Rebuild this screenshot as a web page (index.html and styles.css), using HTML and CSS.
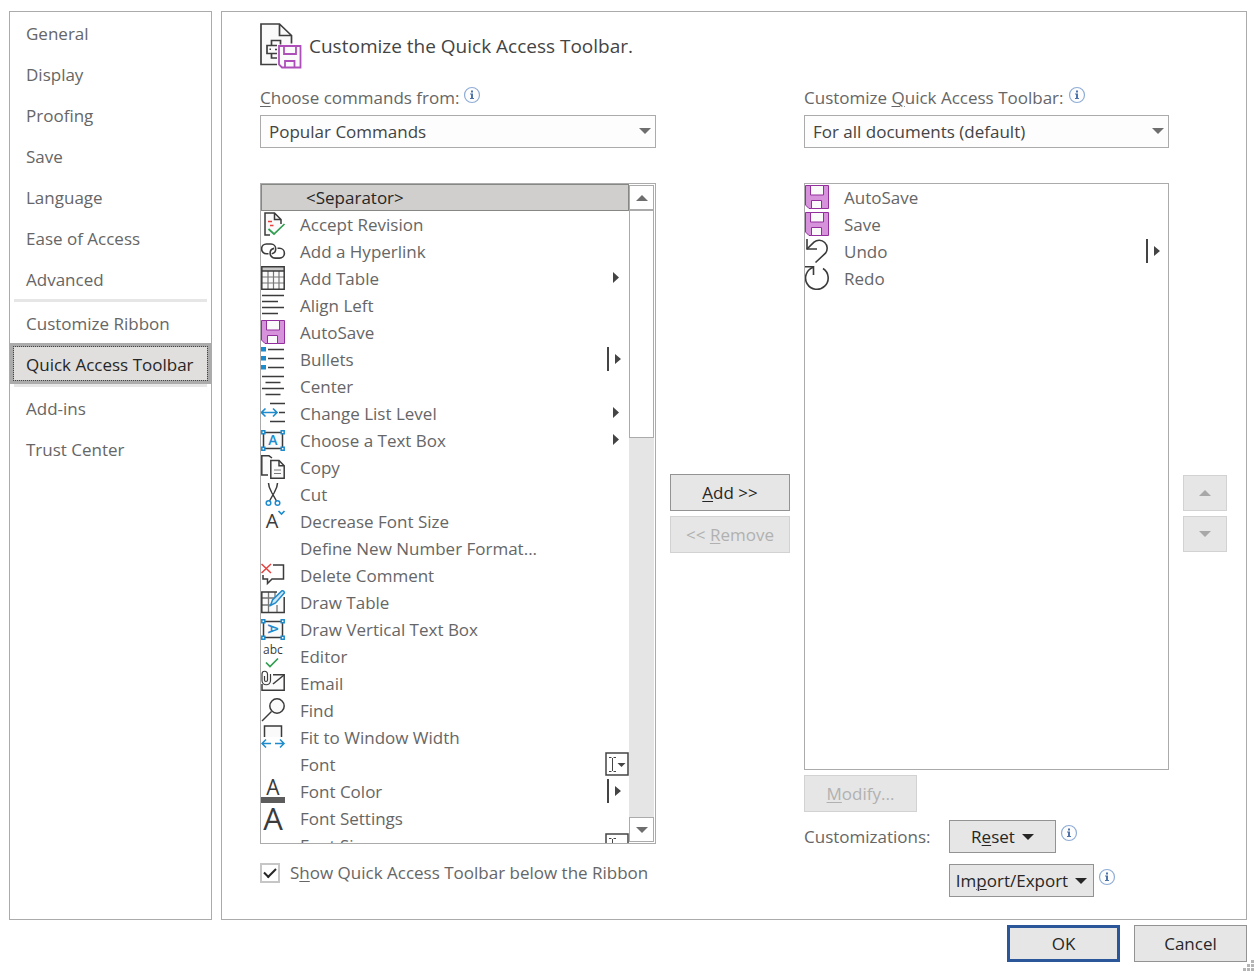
FILE: index.html
```html
<!DOCTYPE html>
<html lang="en">
<head>
<meta charset="utf-8">
<meta name="viewport" content="width=device-width, initial-scale=1">
<title>Word Options</title>
<link rel="stylesheet" href="styles.css">
</head>
<body>
<svg class="sprite" aria-hidden="true">
  <symbol id="floppy" viewBox="0 0 24 24">
    <path d="M.5.5h23v23H4L.5 20z" fill="#d792dc" stroke="#922f9c"/>
    <path d="M5.5.5h13v9.500h-13zM6.500 23.500v-8h10v8z" fill="#fafafa" stroke="#922f9c"/>
  </symbol>
  <symbol id="tri" viewBox="0 0 24 24"><path d="M8 6l6 5.500L8 17z" fill="#444"/></symbol>
  <symbol id="split" viewBox="0 0 24 24"><path d="M2 0h2v24H2zM10 7l6 5-6 5z" fill="#444"/></symbol>
  <symbol id="combo" viewBox="0 0 24 24">
    <path d="M1 1h22v22H1z" fill="#fff" stroke="#444" stroke-width="1.500"/>
    <path d="M4 5.500h2.500M8.500 5.500H11M4 19.500h2.500M8.500 19.500H11M7.500 6v13" fill="none" stroke="#444"/>
    <path d="M12.500 11h8l-4 4z" fill="#444"/>
  </symbol>
  <symbol id="down" viewBox="0 0 12 6"><path d="M0 0h12L6 6z" fill="currentColor"/></symbol>
  <symbol id="up" viewBox="0 0 12 6"><path d="M0 6h12L6 0z" fill="currentColor"/></symbol>
  <symbol id="info" viewBox="0 0 18 18">
    <circle cx="9" cy="9" r="7.500" fill="#fdfdfe" stroke="#8fadd6" stroke-width="1.200"/>
    <path d="M8 4.500h2v2H8zM7 7.500h3V12h1v1H7v-1h1V8.500H7z" fill="#4f74ab"/>
  </symbol>
  <symbol id="textframe" viewBox="0 0 24 24">
    <path d="M2.500 4.500h19v16h-19z" fill="#fafafa" stroke="#3b3b3b" stroke-width="1.500"/>
    <path d="M.8 2.800h3v3h-3zM20.200 2.800h3v3h-3zM.8 19.200h3v3h-3zM20.200 19.200h3v3h-3z" fill="#fff" stroke="#1e8bcd" stroke-width="1.500"/>
  </symbol>
</svg>

<form class="dialog">
  <div class="body">
    <nav class="nav" aria-label="Option categories">
      <a class="nav-item" href="#general">General</a>
      <a class="nav-item" href="#display">Display</a>
      <a class="nav-item" href="#proofing">Proofing</a>
      <a class="nav-item" href="#save">Save</a>
      <a class="nav-item" href="#language">Language</a>
      <a class="nav-item" href="#ease">Ease of Access</a>
      <a class="nav-item" href="#advanced">Advanced</a>
      <hr class="nav-rule">
      <a class="nav-item" href="#ribbon">Customize Ribbon</a>
      <a class="nav-item nav-item-current" href="#toolbar" aria-current="page">Quick Access Toolbar</a>
      <hr class="nav-rule">
      <a class="nav-item" href="#addins">Add-ins</a>
      <a class="nav-item" href="#trust">Trust Center</a>
    </nav>

    <main class="panel">
      <header class="heading">
        <svg class="heading-icon" viewBox="0 0 42 46" fill="none" aria-hidden="true">
          <path d="M17 42H1V1h19l11.500 11.500V22" fill="#fafafa"/>
          <path d="M17 41.500H1V1h18.500L31.500 12.500V20.500M19.500 1v11.500h12" stroke="#3f3f3f" stroke-width="1.700"/>
          <path d="M20.500 21.500v-4h-9v5M17 22.500H7v8h4.500M17 26.500h-2M17 30.500h-5.500v4.500H17" stroke="#3f3f3f" stroke-width="1.700"/>
          <path d="M9.500 25.500h1.500V27H9.500z" fill="#3f3f3f"/>
          <path d="M19 23h21.500v21.500H22l-3-3z" fill="#fafafa" stroke="#ae4fb9" stroke-width="1.800"/>
          <path d="M24 23v8h12v-8M25 44.500V38h9.500v6.500" stroke="#ae4fb9" stroke-width="1.800"/>
        </svg>
        <h1 class="title">Customize the Quick Access Toolbar.</h1>
      </header>

      <div class="editor">
        <div class="field source">
          <div class="label-row">
            <label for="source"><u>C</u>hoose commands from:</label>
            <svg class="info" aria-hidden="true"><use href="#info"/></svg>
          </div>
          <div class="select-box">
            <select class="select" id="source"><option>Popular Commands</option></select>
            <svg class="select-arrow" aria-hidden="true"><use href="#down"/></svg>
          </div>
        </div>

        <div class="field target">
          <div class="label-row">
            <label for="target">Customize <u>Q</u>uick Access Toolbar:</label>
            <svg class="info" aria-hidden="true"><use href="#info"/></svg>
          </div>
          <div class="select-box">
            <select class="select" id="target"><option>For all documents (default)</option></select>
            <svg class="select-arrow" aria-hidden="true"><use href="#down"/></svg>
          </div>
        </div>

        <div class="listbox commands">
          <ul class="list" role="listbox" aria-label="Available commands">
            <li class="row row-selected" role="option" aria-selected="true"><span class="name">&lt;Separator&gt;</span></li>
            <li class="row" role="option">
              <svg class="icon" viewBox="0 0 24 24" fill="none"><path d="M10 23H4V1h9l7 7v6" fill="#fafafa"/><path d="M9 23H4V1h9.500L20 7.500V12M13.500 1v6.500H20" stroke="#3b3b3b" stroke-width="1.500"/><path d="M7 9.500h4M9 13.500h3.500" stroke="#e8403c" stroke-width="1.500"/><path d="M7.500 17l5.500 5L23.500 12" stroke="#2f9e4f" stroke-width="1.700"/></svg>
              <span class="name">Accept Revision</span></li>
            <li class="row" role="option">
              <svg class="icon" viewBox="0 0 24 24" fill="none" stroke="#3b3b3b" stroke-width="1.600"><path d="M7.500 14.800h-2a4.900 4.900 0 0 1 0-9.800H10a4.900 4.900 0 0 1 4.700 5c0 2.500-1.700 4.300-4 4.700"/><path d="M16.500 9.300h2a4.900 4.900 0 0 1 0 9.800H14a4.900 4.900 0 0 1-4.900-5c0-2.500 1.700-4.300 4-4.700"/></svg>
              <span class="name">Add a Hyperlink</span></li>
            <li class="row" role="option">
              <svg class="icon" viewBox="0 0 24 24" fill="none"><path d="M1 1h22v22H1z" fill="#fafafa"/><path d="M1 1h22v4H1z" fill="#c8c8c8"/><path d="M1 11h22M1 17h22M7 5v18M12.500 5v18M18 5v18" stroke="#777" stroke-width="1.200"/><path d="M.8.8h22.400v22.400H.8zM1 5h22" stroke="#3b3b3b" stroke-width="1.500"/></svg>
              <span class="name">Add Table</span><svg class="flyout"><use href="#tri"/></svg></li>
            <li class="row" role="option">
              <svg class="icon" viewBox="0 0 24 24" stroke="#3b3b3b" stroke-width="1.400"><path d="M1 2.500h22M1 8.500h16M1 14.500h22M1 20.500h16"/></svg>
              <span class="name">Align Left</span></li>
            <li class="row" role="option"><svg class="icon"><use href="#floppy"/></svg><span class="name">AutoSave</span></li>
            <li class="row" role="option">
              <svg class="icon" viewBox="0 0 24 24"><path d="M0 0h5v4.500H0zM0 9h5v4.500H0zM0 18h5v4.500H0z" fill="#1e8bcd"/><path d="M7 2.500h16M7 11.500h16M7 20.500h16" stroke="#3b3b3b" stroke-width="1.400"/></svg>
              <span class="name">Bullets</span><svg class="flyout"><use href="#split"/></svg></li>
            <li class="row" role="option">
              <svg class="icon" viewBox="0 0 24 24" stroke="#3b3b3b" stroke-width="1.400"><path d="M1 2.500h22M4.500 8.500h15M1 14.500h22M4.500 20.500h15"/></svg>
              <span class="name">Center</span></li>
            <li class="row" role="option">
              <svg class="icon" viewBox="0 0 24 24" fill="none" stroke-width="1.400"><path d="M9 2.500h15M18 11.500h6M9 20.500h15" stroke="#3b3b3b"/><path d="M1 11.500h15M4.500 7.500l-4 4 4 4M12 7.500l4 4-4 4" stroke="#1e8bcd" stroke-width="1.600"/></svg>
              <span class="name">Change List Level</span><svg class="flyout"><use href="#tri"/></svg></li>
            <li class="row" role="option">
              <svg class="icon" viewBox="0 0 24 24"><use href="#textframe"/><text class="glyph glyph-blue" x="12" y="17" font-size="14">A</text></svg>
              <span class="name">Choose a Text Box</span><svg class="flyout"><use href="#tri"/></svg></li>
            <li class="row" role="option">
              <svg class="icon" viewBox="0 0 24 24" fill="#fafafa" stroke="#3b3b3b" stroke-width="1.500"><path d="M7 20H.8V.8H8L11 3"/><path d="M9.800 5.500H18l5.200 5.200v12.500H9.800z"/><path d="M18 5.500v5.200h5.200" fill="none"/><path d="M13 15h7M13 18.500h7" stroke="#777" stroke-width="1.200"/></svg>
              <span class="name">Copy</span></li>
            <li class="row" role="option">
              <svg class="icon" viewBox="0 0 24 24" fill="none" stroke-width="1.500"><path d="M7.500 1c0 4 2 7 3.500 10l4.500 8M16.500 1c0 4-2 7-3.500 10l-4.500 8" stroke="#3b3b3b"/><circle cx="7.500" cy="21" r="2.300" stroke="#1e8bcd"/><circle cx="16.500" cy="21" r="2.300" stroke="#1e8bcd"/></svg>
              <span class="name">Cut</span></li>
            <li class="row" role="option">
              <svg class="icon" viewBox="0 0 24 24"><text class="glyph" x="11" y="19" font-size="20">A</text><path d="M17.500 2l3 3 3-3" fill="none" stroke="#1e8bcd" stroke-width="1.700"/></svg>
              <span class="name">Decrease Font Size</span></li>
            <li class="row" role="option"><span class="name">Define New Number Format...</span></li>
            <li class="row" role="option">
              <svg class="icon" viewBox="0 0 24 24" fill="none" stroke-width="1.500"><path d="M12 2h10.500v14H11l-4.500 4.500V16H2v-4" stroke="#3b3b3b"/><path d="M.5 1l9.500 9M10 1L.5 10" stroke="#e8403c"/></svg>
              <span class="name">Delete Comment</span></li>
            <li class="row" role="option">
              <svg class="icon" viewBox="0 0 24 24" fill="none"><path d="M1 2h22v20H1z" fill="#fafafa"/><path d="M1 8h13M1 15h9M7.500 2v20M14 2v5M16 15v7" stroke="#777" stroke-width="1.300"/><path d="M16 2H.8v20.500h22.400V7" stroke="#3b3b3b" stroke-width="1.500"/><path d="M9.500 15.500l2-5.500L21 .8q2-.5 2.500 2L14.500 13z" fill="#cfe6f5" stroke="#1e8bcd" stroke-width="1.500"/></svg>
              <span class="name">Draw Table</span></li>
            <li class="row" role="option">
              <svg class="icon" viewBox="0 0 24 24"><use href="#textframe"/><text class="glyph glyph-blue" transform="rotate(90 12 12)" x="12" y="17" font-size="14">A</text></svg>
              <span class="name">Draw Vertical Text Box</span></li>
            <li class="row" role="option">
              <svg class="icon" viewBox="0 0 24 24"><text class="glyph" x="12" y="10" font-size="12">abc</text><path d="M5 18.500l4 4 8-8" fill="none" stroke="#2f9e4f" stroke-width="1.700"/></svg>
              <span class="name">Editor</span></li>
            <li class="row" role="option">
              <svg class="icon" viewBox="0 0 24 24" fill="none" stroke="#3b3b3b" stroke-width="1.500"><path d="M1 13v6.200h22.200V3.800H12" fill="#fafafa"/><path d="M23 4L12 13"/><path d="M3.500 5v4a1.500 1.500 0 0 0 3 0V3a2.500 2.500 0 0 0-5.500 0v6.500a4 4 0 0 0 8.500 0V3" stroke-width="1.200"/></svg>
              <span class="name">Email</span></li>
            <li class="row" role="option">
              <svg class="icon" viewBox="0 0 24 24" fill="#fafafa" stroke="#3b3b3b" stroke-width="1.500"><circle cx="16" cy="8" r="7.200"/><path d="M10.500 13.500L1 23"/></svg>
              <span class="name">Find</span></li>
            <li class="row" role="option">
              <svg class="icon" viewBox="0 0 24 24" fill="none" stroke-width="1.500"><path d="M3.500 12V1h17v11" fill="#fafafa" stroke="#3b3b3b"/><path d="M10 18.500H1M5 14.500l-4 4 4 4M14 18.500h9M19 14.500l4 4-4 4" stroke="#1e8bcd"/></svg>
              <span class="name">Fit to Window Width</span></li>
            <li class="row" role="option"><span class="name">Font</span><svg class="flyout"><use href="#combo"/></svg></li>
            <li class="row" role="option">
              <svg class="icon" viewBox="0 0 24 24"><text class="glyph" x="12" y="16" font-size="21">A</text><path d="M0 18h24v6H0z" fill="#5c5c5c"/></svg>
              <span class="name">Font Color</span><svg class="flyout"><use href="#split"/></svg></li>
            <li class="row" role="option">
              <svg class="icon" viewBox="0 0 24 24"><text class="glyph" x="12" y="24" font-size="31">A</text></svg>
              <span class="name">Font Settings</span></li>
            <li class="row" role="option"><span class="name">Font Size</span><svg class="flyout"><use href="#combo"/></svg></li>
          </ul>
          <div class="scrollbar">
            <button class="scroll-button" type="button" aria-label="Scroll up"><svg class="arrow"><use href="#up"/></svg></button>
            <div class="track"><div class="thumb"></div></div>
            <button class="scroll-button" type="button" aria-label="Scroll down"><svg class="arrow"><use href="#down"/></svg></button>
          </div>
        </div>

        <div class="stack transfer">
          <button class="button" type="button"><span><u>A</u>dd &gt;&gt;</span></button>
          <button class="button" type="button" disabled><span>&lt;&lt; <u>R</u>emove</span></button>
        </div>

        <div class="toolbar-side">
          <div class="listbox">
            <ul class="list" role="listbox" aria-label="Toolbar commands">
              <li class="row" role="option"><svg class="icon"><use href="#floppy"/></svg><span class="name">AutoSave</span></li>
              <li class="row" role="option"><svg class="icon"><use href="#floppy"/></svg><span class="name">Save</span></li>
              <li class="row" role="option">
                <svg class="icon" viewBox="0 0 24 24" fill="none" stroke="#3b3b3b" stroke-width="1.600"><path d="M2 0v10h10"/><path d="M2 10L9 3.200a8 8 0 0 1 11.500 11L10.500 23.500"/></svg>
                <span class="name">Undo</span><svg class="flyout"><use href="#split"/></svg></li>
              <li class="row" role="option">
                <svg class="icon" viewBox="0 0 24 24" fill="none" stroke="#3b3b3b" stroke-width="1.600"><path d="M0 .8h8.500V9"/><path d="M8.500 1.200a11.300 11.300 0 1 0 9.500 1.300"/></svg>
                <span class="name">Redo</span></li>
            </ul>
          </div>
          <button class="button button-modify" type="button" disabled><span><u>M</u>odify...</span></button>
          <div class="customizations">
            <span class="caption">Customizations:</span>
            <div class="menu-row">
              <button class="button button-menu button-reset" type="button"><span>R<u>e</u>set</span><svg class="arrow"><use href="#down"/></svg></button>
              <svg class="info" aria-hidden="true"><use href="#info"/></svg>
            </div>
            <div class="menu-row menu-row-second">
              <button class="button button-menu" type="button"><span>Im<u>p</u>ort/Export</span><svg class="arrow"><use href="#down"/></svg></button>
              <svg class="info" aria-hidden="true"><use href="#info"/></svg>
            </div>
          </div>
        </div>

        <div class="stack reorder">
          <button class="button button-move" type="button" disabled aria-label="Move up"><svg class="arrow"><use href="#up"/></svg></button>
          <button class="button button-move" type="button" disabled aria-label="Move down"><svg class="arrow"><use href="#down"/></svg></button>
        </div>

        <div class="below">
          <input class="check" type="checkbox" id="below" checked>
          <label for="below">S<u>h</u>ow Quick Access Toolbar below the Ribbon</label>
        </div>
      </div>
    </main>
  </div>

  <footer class="footer">
    <button class="button button-footer button-default" type="button">OK</button>
    <button class="button button-footer" type="button">Cancel</button>
  </footer>
  <svg class="grip" viewBox="0 0 11 11" fill="#b5b5b5" aria-hidden="true"><path d="M8 0h3v3H8zM4 4h3v3H4zM8 4h3v3H8zM0 8h3v3H0zM4 8h3v3H4zM8 8h3v3H8z"/></svg>
</form>
</body>
</html>
```
FILE: styles.css
```css
:root {
  --text: #666;
  --ink: #444;
  --line: #ababab;
  --face: #e6e6e6;
  --blue: #2b579a;
}

* {
  box-sizing: border-box;
}

body {
  margin: 0;
  background: #fff;
  color: var(--text);
  font: 17px/24px "Open Sans", "Noto Sans", sans-serif;
}

button,
select,
input {
  font: inherit;
  color: inherit;
  margin: 0;
}

u {
  text-decoration-thickness: 1px;
  text-underline-offset: 2px;
}

.sprite {
  position: absolute;
  width: 0;
  height: 0;
}

.dialog {
  position: relative;
  display: flex;
  flex-direction: column;
  gap: 5px;
  height: 100vh;
  min-height: 640px;
  padding: 11px 9px;
}

.body {
  flex: 1;
  min-height: 0;
  display: grid;
  grid-template-columns: 203px minmax(0, 1fr);
  grid-template-rows: minmax(0, 1fr);
  gap: 9px;
}

.nav,
.panel {
  border: 1px solid var(--line);
}

.nav {
  display: flex;
  flex-direction: column;
}

.nav-item {
  padding: 10px 16px 7px;
  color: var(--text);
  text-decoration: none;
  white-space: nowrap;
}

.nav-item-current {
  padding: 6px 12px 3px;
  border: 4px solid var(--line);
  background: #e0dfde;
  color: #262626;
  outline: 1px dotted var(--ink);
  outline-offset: -4px;
}

.nav-rule {
  align-self: stretch;
  height: 3px;
  margin: 0 4px;
  border: 0;
  background: var(--face);
}

.panel {
  display: flex;
  flex-direction: column;
  gap: 17px;
  padding: 11px 19px 22px 38px;
}

.heading {
  display: flex;
  align-items: center;
  gap: 7px;
}

.heading-icon {
  width: 42px;
  height: 46px;
}

.title {
  margin: 0;
  color: var(--ink);
  font-size: 19px;
  font-weight: 400;
}

.editor {
  flex: 1;
  min-height: 0;
  display: grid;
  grid-template-columns: minmax(0, 396fr) 120px minmax(0, 365fr) 44px;
  grid-template-rows: auto minmax(0, 1fr) 53px;
  grid-template-areas:
    "source . target ."
    "commands transfer side reorder"
    "below below side .";
  column-gap: 14px;
}

.source { grid-area: source; }
.target { grid-area: target; }
.commands { grid-area: commands; }
.transfer { grid-area: transfer; }
.toolbar-side { grid-area: side; }
.reorder { grid-area: reorder; }
.below { grid-area: below; }

.field {
  padding-bottom: 35px;
}

.label-row {
  display: flex;
  align-items: flex-start;
  gap: 4px;
  height: 29px;
  white-space: nowrap;
}

.info {
  flex: none;
  width: 18px;
  height: 18px;
}

.select-box {
  position: relative;
}

.select {
  appearance: none;
  display: block;
  width: 100%;
  height: 33px;
  padding: 0 24px 0 8px;
  border: 1px solid var(--line);
  border-radius: 0;
  background: #fdfdfd;
  color: var(--ink);
}

.select-arrow {
  position: absolute;
  top: 13px;
  right: 5px;
  width: 12px;
  height: 6px;
  color: #6e6e6e;
  pointer-events: none;
}

.listbox {
  display: flex;
  border: 1px solid var(--line);
  min-height: 0;
}

.list {
  flex: 1;
  min-width: 0;
  margin: 0;
  padding: 0;
  list-style: none;
  overflow: hidden;
}

.row {
  display: flex;
  align-items: flex-start;
  height: 27px;
  padding-top: 1px;
}

.name {
  flex: 1;
  white-space: nowrap;
  padding-top: 1px;
}

.icon {
  flex: none;
  width: 24px;
  height: 24px;
  margin-right: 15px;
  overflow: visible;
}

.name:first-child {
  padding-left: 39px;
}

.row-selected {
  padding-top: 0;
  border: 1px solid #858883;
  background: #d0cfcd;
  color: #262626;
}

.row-selected .name:first-child {
  padding-left: 44px;
}

.flyout {
  flex: none;
  width: 24px;
  height: 24px;
}

.glyph {
  fill: #3b3b3b;
  font-family: "Open Sans", sans-serif;
  text-anchor: middle;
}

.glyph-blue {
  fill: #1e8bcd;
  font-weight: 600;
}

.scrollbar {
  display: flex;
  flex-direction: column;
  width: 26px;
  padding: 1px 1px 1px 0;
}

.scroll-button {
  display: grid;
  place-items: center;
  height: 25px;
  padding: 0;
  border: 1px solid var(--line);
  background: #fff;
}

.track {
  flex: 1;
  background: #e5e5e5;
}

.thumb {
  height: 37.5%;
  border: 1px solid var(--line);
  background: #fff;
}

.arrow {
  width: 12px;
  height: 6px;
  color: #6e6e6e;
}

.stack {
  display: flex;
  flex-direction: column;
  justify-content: center;
  gap: 5px;
}

.button {
  height: 37px;
  padding: 0;
  border: 1px solid #939393;
  border-radius: 0;
  background: var(--face);
  color: #262626;
  white-space: nowrap;
}

.button:disabled {
  border-color: #d2d2d2;
  color: #b1b1b1;
}

.button-move {
  display: grid;
  place-items: center;
  height: 36px;
}

.button-move .arrow {
  color: #a8a8a8;
}

.toolbar-side {
  display: flex;
  flex-direction: column;
  min-height: 0;
}

.toolbar-side .listbox {
  flex: 1;
}

.button-modify {
  width: 113px;
  margin: 5px 0 8px;
}

.customizations {
  display: grid;
  grid-template-columns: 145px auto;
  justify-content: start;
  row-gap: 11px;
}

.caption {
  padding-top: 5px;
}

.menu-row {
  display: flex;
  gap: 4px;
}

.menu-row .info {
  margin-top: 4px;
}

.menu-row-second {
  grid-column: 2;
}

.button-menu {
  display: flex;
  align-items: center;
  justify-content: center;
  gap: 7px;
  min-width: 145px;
  height: 33px;
}

.button-menu .arrow {
  color: #262626;
}

.button-reset {
  min-width: 107px;
}

.below {
  display: flex;
  align-items: center;
  gap: 10px;
  align-self: start;
  margin-top: 17px;
}

.check {
  appearance: none;
  display: grid;
  place-items: center;
  width: 20px;
  height: 20px;
  border: 2px solid #c6c6c6;
  background: #fff;
}

.check:checked::before {
  content: "";
  width: 10px;
  height: 5px;
  margin-bottom: 3px;
  border: solid #262626;
  border-width: 0 0 2px 2px;
  transform: rotate(-45deg);
}

.footer {
  display: flex;
  justify-content: flex-end;
  gap: 14px;
}

.button-footer {
  width: 113px;
}

.button-default {
  border: 3px solid var(--blue);
}

.grip {
  position: absolute;
  right: 2px;
  bottom: 2px;
  width: 11px;
  height: 11px;
}
```
